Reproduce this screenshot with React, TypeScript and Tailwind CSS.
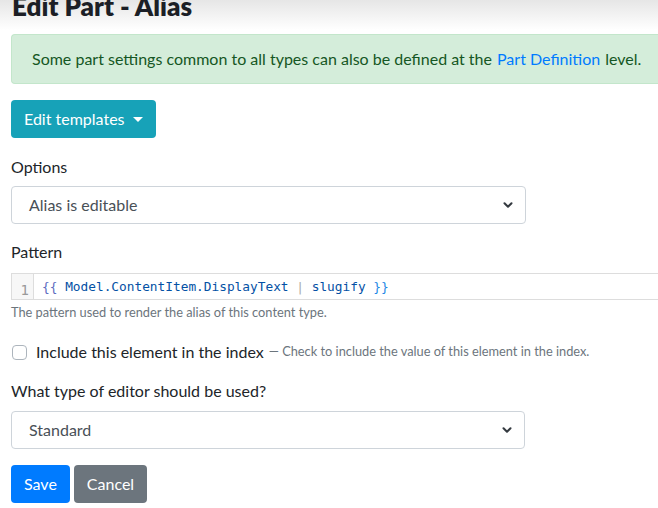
import { ChevronDown } from 'lucide-react';

function Select({ value, width }: { value: string; width: string }) {
  return (
    <div className={`${width} h-[38px] flex items-center justify-between border border-[#ced4da] rounded-[4px] pl-[17px] pr-[10px] text-[#495057]`}>
      <span>{value}</span>
      <ChevronDown size={14} strokeWidth={3.5} className="text-[#343a40]" />
    </div>
  );
}

export default function App() {
  return (
    <div className="w-[658px] h-[508px] overflow-hidden bg-white text-[#212529] text-[16px] font-['Lato',sans-serif]">
      <div className="h-[30px] bg-gradient-to-b from-[#e6e6e6] to-white px-[12px] overflow-hidden">
        <h1 className="-mt-[6px] text-[26px] font-extrabold leading-[25px] text-[#1c1f26]">Edit Part - Alias</h1>
      </div>

      <div className="pl-[11px]">
        <div className="mt-[4px] h-[50px] flex items-center pl-[20px] bg-[#d4edda] border border-[#c3e6cb] border-r-0 rounded-l-[4px] text-[#155724] whitespace-nowrap">
          Some part settings common to all types can also be defined at the <span className="text-[#007bff] mx-[5px]">Part Definition</span> level.
        </div>

        <button className="mt-[16px] h-[38px] px-[13px] flex items-center gap-[8px] bg-[#17a2b8] text-white rounded-[4px]">
          Edit templates
          <span className="w-0 h-0 border-l-[5px] border-r-[5px] border-t-[5px] border-l-transparent border-r-transparent border-t-white" />
        </button>

        <div className="mt-[17px] leading-[24px]">Options</div>
        <div className="mt-[7px]">
          <Select value="Alias is editable" width="w-[515px]" />
        </div>

        <div className="mt-[16px] leading-[24px]">Pattern</div>
        <div className="mt-[9px] h-[27px] flex border border-[#dddddd] border-r-0">
          <div className="w-[22px] bg-[#f7f7f7] border-r border-[#dddddd] flex items-end justify-end pr-[4px] pb-[2px] text-[14px] leading-none text-[#999999] font-['DejaVu_Sans_Mono',monospace]">1</div>
          <div className="pl-[8px] flex items-center whitespace-nowrap text-[12.8px] font-['DejaVu_Sans_Mono',monospace]">
            <span className="text-[#5c6bc0]">{'{{'}</span>
            <span className="text-[#0451a5]">&nbsp;Model.ContentItem.DisplayText&nbsp;</span>
            <span className="text-[#aaaaaa]">|</span>
            <span className="text-[#0451a5]">&nbsp;slugify&nbsp;</span>
            <span className="text-[#1e88e5]">{'}}'}</span>
          </div>
        </div>
        <div className="mt-[3px] text-[12.8px] leading-[18px] text-[#6c757d]">The pattern used to render the alias of this content type.</div>

        <div className="mt-[19px] flex items-center whitespace-nowrap">
          <span className="w-[15px] h-[15px] ml-[1px] border border-[#adb5bd] rounded-[4px] bg-white" />
          <span className="ml-[9px] leading-[24px]">Include this element in the index</span>
          <span className="ml-[5px] text-[12.8px] text-[#6c757d]">— Check to include the value of this element in the index.</span>
        </div>

        <div className="mt-[15px] leading-[24px]">What type of editor should be used?</div>
        <div className="mt-[8px]">
          <Select value="Standard" width="w-[514px]" />
        </div>

        <div className="mt-[16px] flex gap-[4px]">
          <button className="h-[38px] px-[13px] bg-[#007bff] text-white rounded-[4px]">Save</button>
          <button className="h-[38px] px-[13px] bg-[#6c757d] text-white rounded-[4px]">Cancel</button>
        </div>
      </div>
    </div>
  );
}
